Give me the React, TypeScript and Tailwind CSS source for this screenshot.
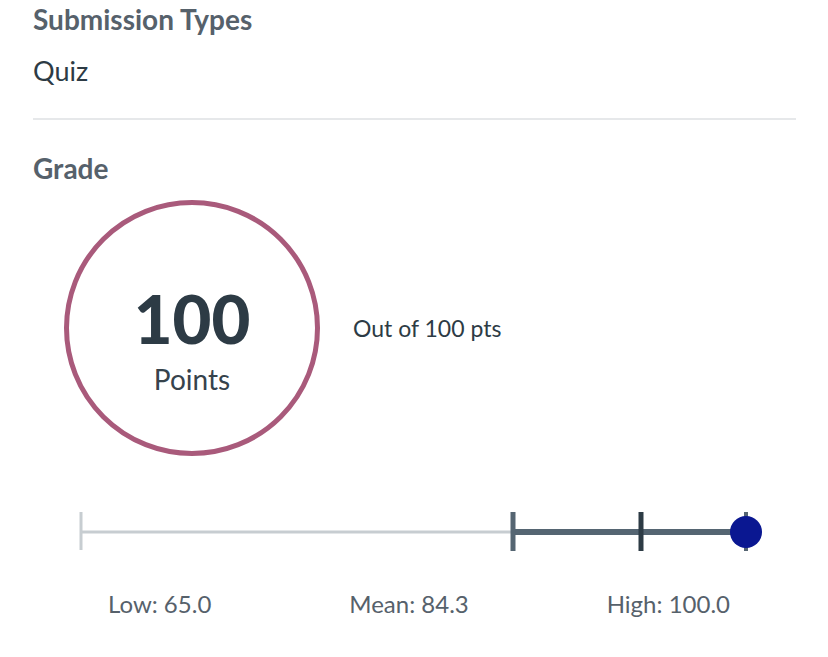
import React from 'react';

const font = { fontFamily: 'Lato, "Noto Sans", sans-serif' };

const GradeSlider: React.FC = () => (
    <svg width="763" height="50" viewBox="0 0 763 50" className="block">
        {/* low range */}
        <line x1="48" y1="25" x2="480" y2="25" stroke="#c7cdd1" strokeWidth="3" />
        <line x1="48" y1="5" x2="48" y2="43" stroke="#c7cdd1" strokeWidth="3" />
        {/* upper range */}
        <line x1="480" y1="25" x2="713" y2="25" stroke="#556572" strokeWidth="6" />
        <line x1="480" y1="5" x2="480" y2="44" stroke="#556572" strokeWidth="5" />
        <line x1="608" y1="5" x2="608" y2="44" stroke="#2d3b45" strokeWidth="5" />
        <line x1="713" y1="5" x2="713" y2="44" stroke="#556572" strokeWidth="4" />
        <circle cx="713" cy="25" r="16" fill="#0a1791" />
    </svg>
);

export default function App() {
    return (
        <div className="w-[828px] h-[657px] bg-white pl-[33px] pr-[32px] pt-[3px]" style={font}>
            <h2 className="text-[28px] leading-[32px] font-bold text-[#56616b]">Submission Types</h2>
            <div className="mt-[20px] text-[27px] leading-[32px] text-[#2d3b45]">Quiz</div>

            <div className="mt-[31px] h-[2px] bg-[#e6e8ea]" />

            <h2 className="mt-[32px] text-[28px] leading-[32px] font-bold text-[#56616b]">Grade</h2>

            <div className="mt-[16px] ml-[31px] flex items-center gap-[33px]">
                <div className="w-[256px] h-[256px] rounded-full border-[5px] border-[#a95a7b] flex flex-col items-center pt-[80px]">
                    <div className="text-[67px] leading-none font-black text-[#2d3b45]">100</div>
                    <div className="mt-[13px] text-[28px] leading-none text-[#36434c]">Points</div>
                </div>
                <div className="text-[23px] text-[#2d3b45]">Out of 100 pts</div>
            </div>

            <div className="mt-[51px]">
                <GradeSlider />
            </div>

            <div className="mt-[33px] pl-[75px] pr-[66px] flex justify-between text-[24px] leading-[28px] text-[#56616b]">
                <span>Low: 65.0</span>
                <span>Mean: 84.3</span>
                <span>High: 100.0</span>
            </div>
        </div>
    );
}
